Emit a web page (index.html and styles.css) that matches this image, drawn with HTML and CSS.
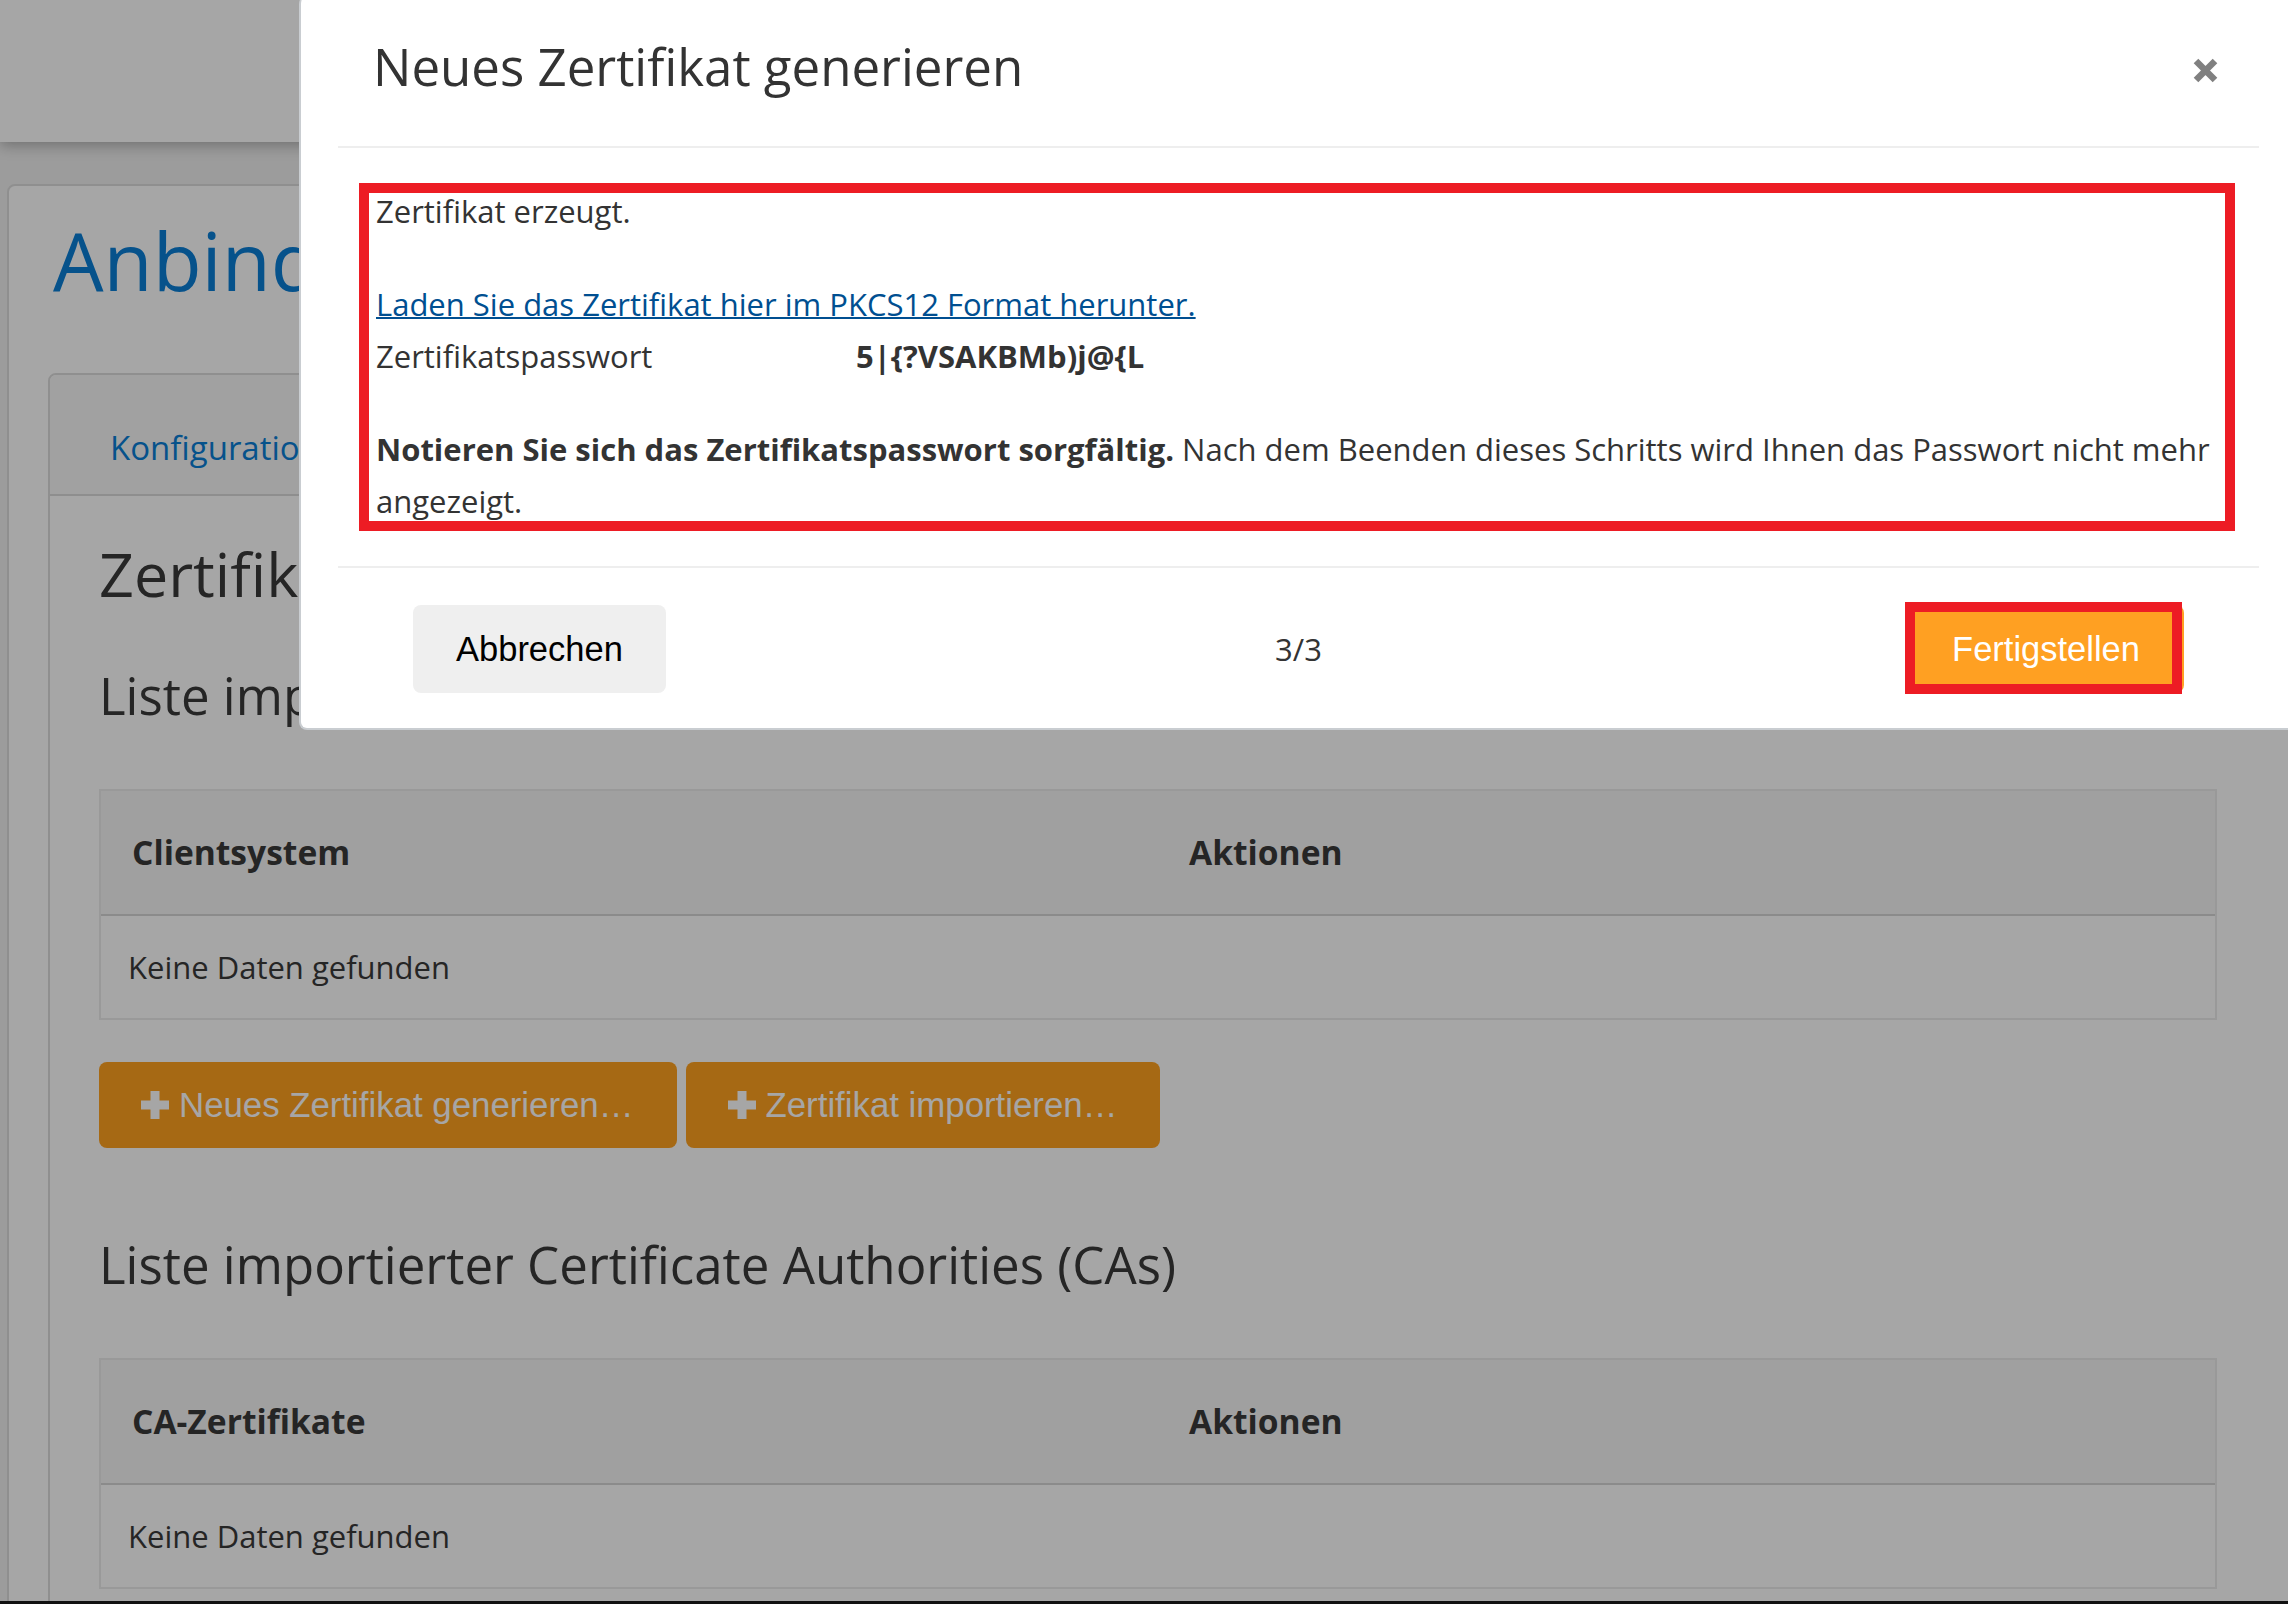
FILE: index.html
```html
<!DOCTYPE html>
<html lang="de">
<head>
<meta charset="utf-8">
<title>Neues Zertifikat generieren</title>
<link rel="stylesheet" href="styles.css">
</head>
<body>
<div class="page">
  <header class="topbar"></header>
  <main class="card">
    <h1 class="page-title">Anbindung an Clientsysteme</h1>
    <section class="tabs">
      <nav class="tab-head"><a class="tab" href="#">Konfiguration</a></nav>
      <div class="tab-body">
        <h2 class="section-title">Zertifikate</h2>
        <h3 class="list-title">Liste importierter Clientzertifikate</h3>
        <table class="data-table">
          <thead><tr><th>Clientsystem</th><th>Aktionen</th></tr></thead>
          <tbody><tr><td colspan="2">Keine Daten gefunden</td></tr></tbody>
        </table>
        <div class="btn-row">
          <button class="btn-orange" type="button"><svg class="plus" viewBox="0 0 28 28" width="28" height="28"><path d="M9.5 0h9v9.5H28v9h-9.5V28h-9v-9.5H0v-9h9.5z" fill="#fff"/></svg>Neues Zertifikat generieren…</button>
          <button class="btn-orange" type="button"><svg class="plus" viewBox="0 0 28 28" width="28" height="28"><path d="M9.5 0h9v9.5H28v9h-9.5V28h-9v-9.5H0v-9h9.5z" fill="#fff"/></svg>Zertifikat importieren…</button>
        </div>
        <h3 class="list-title list-title-ca">Liste importierter Certificate Authorities (CAs)</h3>
        <table class="data-table">
          <thead><tr><th>CA-Zertifikate</th><th>Aktionen</th></tr></thead>
          <tbody><tr><td colspan="2">Keine Daten gefunden</td></tr></tbody>
        </table>
      </div>
    </section>
  </main>
</div>
<div class="backdrop"></div>
<div class="modal">
  <div class="modal-header">
    <h4 class="modal-title">Neues Zertifikat generieren</h4>
    <button class="close" type="button" aria-label="Schließen"><svg viewBox="0 0 25 25" width="25" height="25"><path d="M3 3L22 22M22 3L3 22" stroke="#808080" stroke-width="6.5"/></svg></button>
  </div>
  <div class="modal-body">
    <p>Zertifikat erzeugt.</p>
    <p class="link-p"><a href="#">Laden Sie das Zertifikat hier im PKCS12 Format herunter.</a></p>
    <div class="pw-row"><span class="pw-label">Zertifikatspasswort</span><strong>5|{?VSAKBMb)j@{L</strong></div>
    <p class="note"><strong>Notieren Sie sich das Zertifikatspasswort sorgfältig.</strong> Nach dem Beenden dieses Schritts wird Ihnen das Passwort nicht mehr angezeigt.</p>
    <div class="annot"></div>
  </div>
  <div class="modal-footer">
    <button class="btn-default" type="button">Abbrechen</button>
    <span class="step">3/3</span>
    <button class="btn-primary" type="button">Fertigstellen<span class="annot annot-btn"></span></button>
  </div>
</div>
<div class="taskbar"></div>
</body>
</html>
```
FILE: styles.css
```css
* { box-sizing: border-box; }
html, body { margin: 0; padding: 0; }
body {
  width: 2288px; height: 1604px; overflow: hidden; position: relative;
  background: #f0f0f0; color: #3a3a3a;
  font-family: "Open Sans", sans-serif;
}
.page { width: 2288px; height: 1604px; overflow: hidden; }
.topbar { height: 142px; background: #fff; box-shadow: 0 3px 14px rgba(0,0,0,.3); position: relative; z-index: 1; }
.card {
  margin: 42px -120px 0 7px; background: #fff;
  border: 2px solid #dcdcdc; border-radius: 8px;
  padding: 26px 0 60px 39px;
}
.page-title { margin: 0 0 65px 5px; font: 400 80px/96px "Open Sans", sans-serif; color: #0a7ed6; white-space: nowrap; }
.tabs { border: 2px solid #dcdcdc; border-radius: 8px; overflow: hidden; }
.tab-head { background: #f8f8f8; border-bottom: 2px solid #dbdbdb; padding: 49px 0 22px 60px; }
.tab { font: 400 33px/48px "Open Sans", sans-serif; color: #0a7ed6; text-decoration: none; }
.tab-body { padding: 40.7px 0 80px 49px; }
.section-title { margin: 0; font: 400 61px/73.2px "Open Sans", sans-serif; color: #3a3a3a; white-space: nowrap; }
.list-title { margin: 54.75px 0 0; font: 400 51px/61.2px "Open Sans", sans-serif; color: #3a3a3a; white-space: nowrap; }
.list-title-ca { margin-top: 85.65px; }
.data-table {
  margin-top: 63.15px; width: 2118px; table-layout: fixed;
  border-collapse: separate; border-spacing: 0; border: 2px solid #ebebeb;
}
.data-table th {
  width: 50%; text-align: left; background: #f6f6f6;
  border-bottom: 2px solid #d6d6d6; padding: 37.5px 31px;
  font: 700 33.6px/48px "Open Sans", sans-serif; color: #3a3a3a;
}
.data-table td { padding: 27px; font: 400 31px/48px "Open Sans", sans-serif; color: #3a3a3a; }
.btn-row { display: flex; gap: 9px; margin-top: 42px; }
.btn-orange {
  display: inline-flex; align-items: center; gap: 10px;
  background: #ffa11f; color: #fff; border: 0; border-radius: 8px;
  font: 400 34.8px/40px "Liberation Sans", Arial, sans-serif;
  padding: 23px 43px 23px 42px;
}
.plus { display: block; flex: none; }
.backdrop { position: fixed; inset: 0; background: rgba(0,0,0,.35); z-index: 10; }
.modal {
  position: absolute; z-index: 20; top: -6px; left: 299px; width: 1999px;
  background: #fff; border-left: 2px solid #c9cdd1; border-bottom: 2px solid #c9cdd1;
  border-radius: 10px 0 0 8px; padding: 0 39px 0 37px; color: #333;
}
.modal-header {
  display: flex; justify-content: space-between; align-items: flex-start;
  padding: 41.65px 41px 49.15px 35px; border-bottom: 2px solid #eee;
}
.modal-title { margin: 0; font: 400 51px/61.2px "Open Sans", sans-serif; color: #333; }
.close { margin-top: 22.35px; padding: 0; border: 0; background: none; width: 25px; height: 25px; }
.close svg { display: block; }
.modal-body { position: relative; padding: 37px 10px 39.4px 38px; font: 400 31px/52px "Open Sans", sans-serif; color: #333; }
.modal-body p { margin: 0 0 41px; }
.modal-body .link-p { margin-bottom: 0; }
.modal-body a { color: #004f91; text-decoration: underline; text-decoration-thickness: 2px; }
.pw-row { display: flex; margin-bottom: 41px; }
.pw-label { width: 480px; flex: none; }
.modal-body .note { margin: 0; }
.annot { position: absolute; top: 35px; bottom: 35px; left: 21px; right: 24px; border: 10px solid #ed1c24; pointer-events: none; }
.modal-footer {
  display: grid; grid-template-columns: 1fr auto 1fr; align-items: center;
  padding: 37px 75px 35px; border-top: 2px solid #eee;
}
.btn-default {
  justify-self: start; background: #efefef; color: #000; border: 0; border-radius: 8px;
  font: 400 34.5px/40px "Liberation Sans", Arial, sans-serif; padding: 24px 43px;
}
.step { justify-self: center; font: 400 31px/52px "Open Sans", sans-serif; color: #333; }
.btn-primary {
  justify-self: end; position: relative; background: #ffa022; color: #fff; border: 0; border-radius: 8px;
  font: 400 34.5px/40px "Liberation Sans", Arial, sans-serif; padding: 24px 44px;
}
.annot-btn { top: -3px; left: -3px; right: 2px; bottom: -1px; }
.taskbar { position: fixed; left: 0; right: 0; bottom: 0; height: 3px; background: #111; z-index: 30; }
```
